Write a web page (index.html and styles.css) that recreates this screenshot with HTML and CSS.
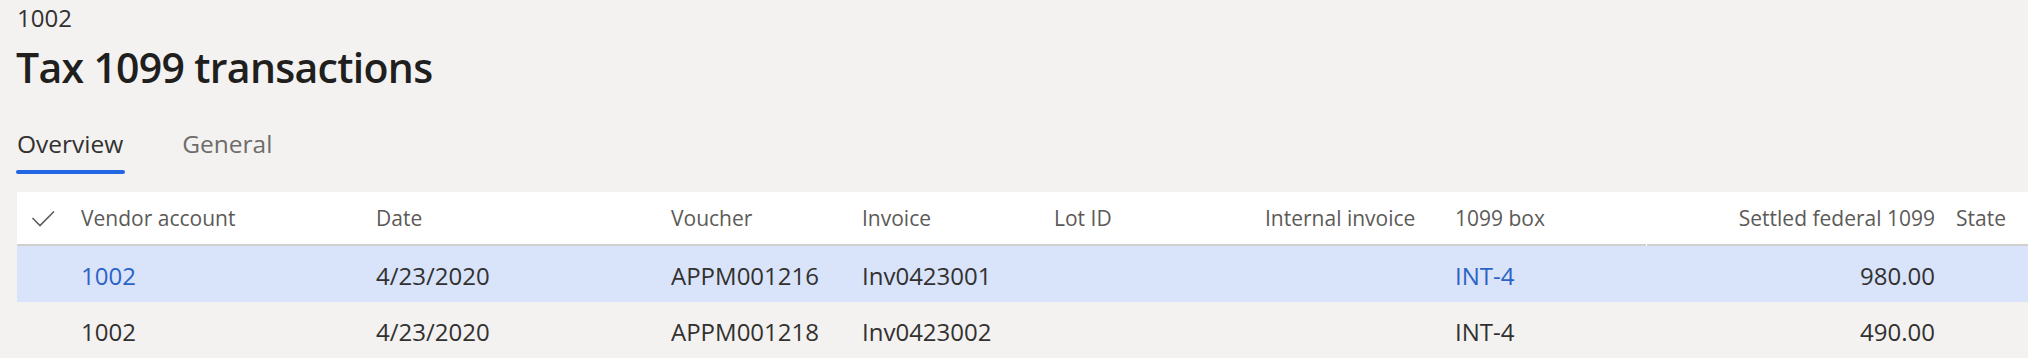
FILE: index.html
```html
<!DOCTYPE html>
<html>
<head>
    <title>Tax 1099 transactions</title>
    <link rel="stylesheet" href="styles.css">
</head>
<body>
    <div class="page">
        <!-- Page header -->
        <div class="caption">1002</div>
        <h1 class="title">Tax 1099 transactions</h1>

        <div class="tabs">
            <div class="tab active">Overview</div>
            <div class="tab">General</div>
        </div>

        <!-- Transactions grid -->
        <div class="grid">
            <div class="grid-row grid-head">
                <div class="cell cell-check">
                    <svg class="check-icon" width="24" height="16" viewBox="0 0 24 16">
                        <polyline points="1.5,7 9,14.5 23,0.5" fill="none" stroke="#605e5c" stroke-width="1.6"/>
                    </svg>
                </div>
                <div class="cell">Vendor account</div>
                <div class="cell">Date</div>
                <div class="cell">Voucher</div>
                <div class="cell">Invoice</div>
                <div class="cell">Lot ID</div>
                <div class="cell">Internal invoice</div>
                <div class="cell">1099 box</div>
                <div class="cell cell-num cell-split">Settled federal 1099</div>
                <div class="cell">State</div>
            </div>

            <div class="grid-row grid-body selected">
                <div class="cell cell-check"></div>
                <div class="cell"><span class="link">1002</span></div>
                <div class="cell">4/23/2020</div>
                <div class="cell">APPM001216</div>
                <div class="cell">Inv0423001</div>
                <div class="cell"></div>
                <div class="cell"></div>
                <div class="cell"><span class="link">INT-4</span></div>
                <div class="cell cell-num">980.00</div>
                <div class="cell"></div>
            </div>

            <div class="grid-row grid-body hovered">
                <div class="cell cell-check"></div>
                <div class="cell">1002</div>
                <div class="cell">4/23/2020</div>
                <div class="cell">APPM001218</div>
                <div class="cell">Inv0423002</div>
                <div class="cell"></div>
                <div class="cell"></div>
                <div class="cell">INT-4</div>
                <div class="cell cell-num">490.00</div>
                <div class="cell"></div>
            </div>
        </div>
    </div>
</body>
</html>
```

FILE: styles.css
```css
body {
    margin: 0;
    padding: 0;
    font-family: 'Segoe UI', 'Open Sans', sans-serif;
    background: #f3f2f1;
    color: #323130;
}

.page {
    padding: 2px 0 0 17px;
    height: 356px;
    overflow: hidden;
}

.caption {
    font-size: 24px;
    line-height: 32px;
    color: #323130;
}

.title {
    margin: 5px 0 0 -1px;
    font-size: 41px;
    line-height: 56px;
    font-weight: 600;
    letter-spacing: -0.7px;
    color: #201f1e;
}

.tabs {
    display: flex;
    gap: 59px;
    margin-top: 32px;
}

.tab {
    font-size: 24.5px;
    line-height: 34px;
    color: #6e6c6a;
    padding-bottom: 13px;
}

.tab.active {
    color: #323130;
    position: relative;
}

.tab.active::after {
    content: "";
    position: absolute;
    left: -1px;
    right: -2px;
    bottom: 0;
    height: 4px;
    border-radius: 2px;
    background: #2266e3;
}

.grid {
    margin-top: 18px;
    background: #ffffff;
    padding-bottom: 1px;
}

.grid-row {
    display: grid;
    grid-template-columns: 64px 295px 295px 191px 192px 211px 190px 191px 310px 1fr;
}

.cell {
    display: flex;
    align-items: center;
    white-space: nowrap;
    overflow: hidden;
}

.grid-head {
    height: 54px;
    font-size: 21px;
    color: #5c5a58;
}

.grid-head .cell {
    border-bottom: 2px solid #d2d0ce;
}

.cell-check {
    padding-left: 14px;
}

.check-icon {
    display: block;
    margin-top: 2px;
}

.cell-num {
    justify-content: flex-end;
    padding-right: 21px;
}

.grid-head .cell-split {
    margin-left: 1px;
}

.grid-body {
    height: 56px;
    font-size: 24px;
    color: #323130;
}

.grid-body .cell {
    padding-top: 2px;
}

.grid-body.selected {
    background: #d9e4fa;
}

.grid-body.hovered {
    background: #f3f2f1;
}

.link {
    color: #2b63c6;
}
```
